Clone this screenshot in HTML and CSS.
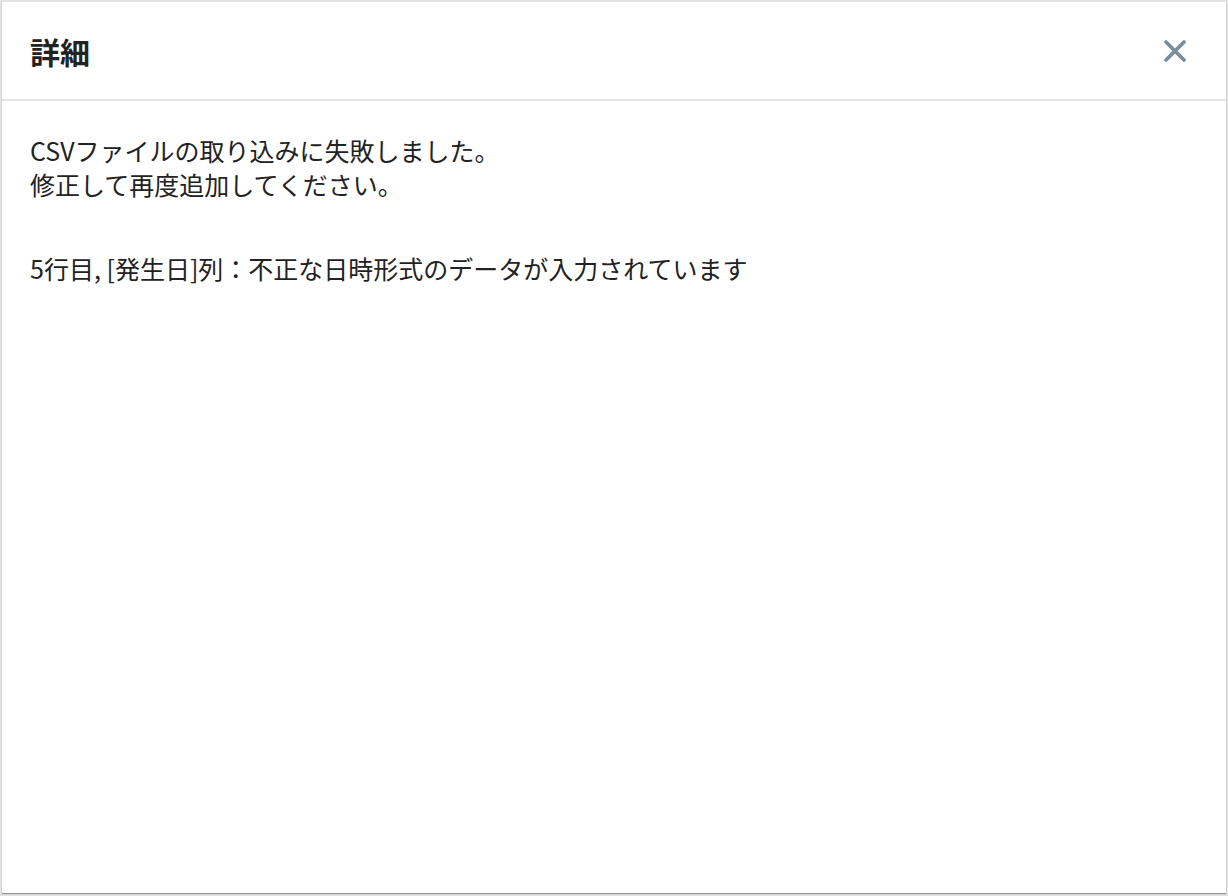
FILE: index.html
```html
<!DOCTYPE html>
<html lang="ja">
<head>
    <meta charset="UTF-8">
    <meta name="viewport" content="width=device-width, initial-scale=1.0">
    <title>詳細</title>
    <link rel="stylesheet" href="styles.css">
</head>
<body>
    <div class="modal">
        <div class="modal-header">
            <h2 class="modal-title">詳細</h2>
            <button class="close-button" aria-label="閉じる">
                <svg width="24" height="24" viewBox="0 0 24 24">
                    <path d="M3 3 L21 21 M21 3 L3 21" stroke="#7b8c9c" stroke-width="3.8" stroke-linecap="round" fill="none"/>
                </svg>
            </button>
        </div>
        <div class="modal-body">
            <p class="message">CSVファイルの取り込みに失敗しました。<br>修正して再度追加してください。</p>
            <p class="error-line">5行目, [発生日]列：不正な日時形式のデータが入力されています</p>
        </div>
    </div>
</body>
</html>
```

FILE: styles.css
```css
html, body {
    height: 100%;
}
body {
    margin: 0;
    background: #e3e3e3;
    font-family: "Noto Sans CJK JP", "Noto Sans", sans-serif;
    color: #222;
    box-sizing: border-box;
    padding: 2px 2px 3px 2px;
}
.modal {
    height: 100%;
    background: #fff;
    box-shadow: 0 1px 1px rgba(0, 0, 0, 0.35);
    display: flex;
    flex-direction: column;
}
.modal-header {
    height: 97px;
    border-bottom: 2px solid #e1e4e7;
    display: flex;
    align-items: center;
    justify-content: space-between;
    padding: 0 28px;
    flex-shrink: 0;
}
.modal-title {
    margin: 0;
    font-size: 30px;
    font-weight: 700;
    color: #222;
    line-height: 1;
    padding-top: 1px;
}
.close-button {
    background: none;
    border: none;
    padding: 0;
    margin-right: 11px;
    cursor: pointer;
    display: flex;
    margin-top: 0;
}
.modal-body {
    padding: 32px 28px;
}
.message {
    margin: 0;
    font-size: 25px;
    line-height: 34px;
}
.error-line {
    margin: 50px 0 0;
    font-size: 25px;
    line-height: 34px;
}
```
